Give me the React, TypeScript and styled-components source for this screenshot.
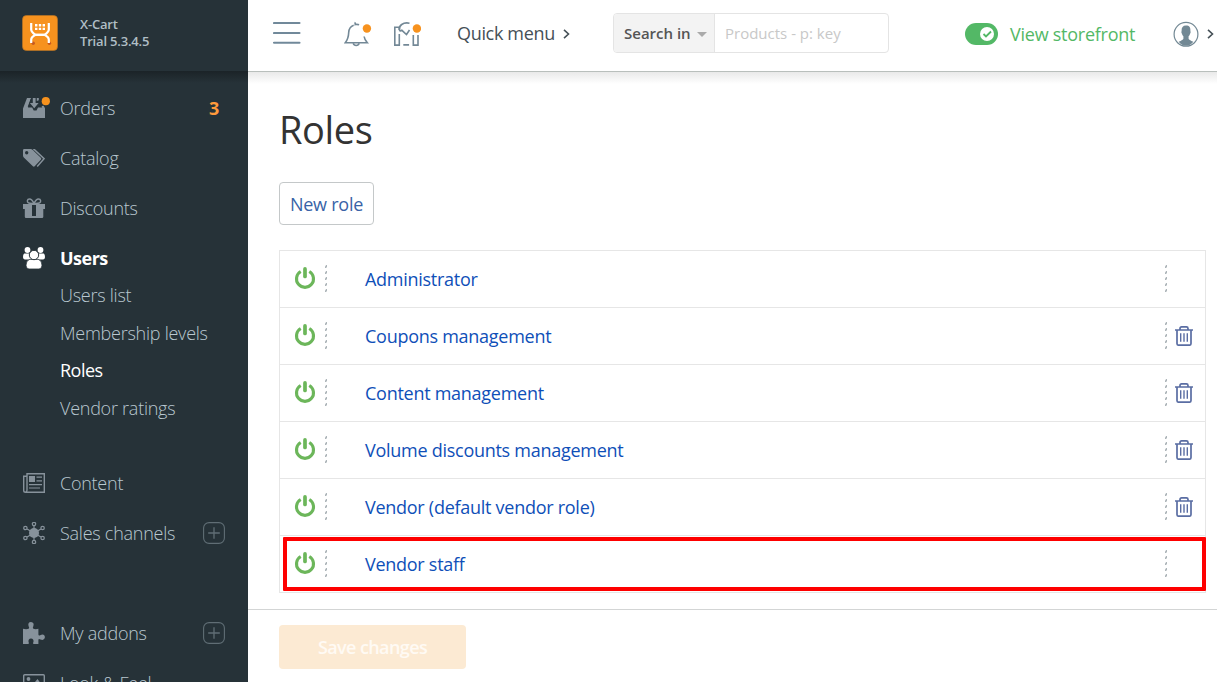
import React from 'react';
import styled, { createGlobalStyle } from 'styled-components';

const GlobalStyle = createGlobalStyle`
  * { box-sizing: border-box; }
  body {
    margin: 0;
    background: #fff;
    font-family: 'Open Sans', 'Noto Sans', sans-serif;
    font-size: 18px;
    letter-spacing: -0.25px;
    color: #333;
    overflow: hidden;
  }
`;

const Page = styled.div`
  display: flex;
  width: 100%;
  height: 682px;
  overflow: hidden;
`;

const Sidebar = styled.aside`
  flex: none;
  display: flex;
  flex-direction: column;
  width: 248px;
  height: 682px;
  background: #263238;
  overflow: hidden;
`;

const Brand = styled.div`
  flex: none;
  display: flex;
  align-items: flex-start;
  height: 71px;
  padding: 15px 0 0 22px;
`;

const BrandText = styled.div`
  margin: 1px 0 0 22px;
  font-size: 13px;
  line-height: 17px;
  font-weight: 600;
  letter-spacing: -0.18px;
  color: #b0bec5;
  white-space: nowrap;
`;

const Nav = styled.nav`
  flex: 1;
  min-height: 0;
  padding-top: 12px;
  background: linear-gradient(#1b2327, #263238 12px) no-repeat;
  overflow: hidden;
`;

const NavItem = styled.div<{ $active?: boolean; $gap?: number }>`
  display: flex;
  align-items: center;
  height: 50px;
  margin-top: ${(p) => p.$gap || 0}px;
  padding: 0 23px;
  color: ${(p) => (p.$active ? '#fff' : '#b9c8d0')};
  font-weight: ${(p) => (p.$active ? 700 : 300)};
  letter-spacing: ${(p) => (p.$active ? -0.5 : -0.25)}px;
  white-space: nowrap;

  > svg:first-child {
    flex: none;
    color: ${(p) => (p.$active ? '#fff' : '#87929b')};
  }
`;

const NavLabel = styled.span`
  flex: 1;
  margin-left: 15px;
`;

const Count = styled.span`
  width: 22px;
  text-align: center;
  font-weight: 700;
  color: #ff9a3c;
`;

const SubMenu = styled.div`
  margin: -6px 0 0;
  padding-left: 60px;
`;

const SubItem = styled.div<{ $active?: boolean }>`
  height: 37.5px;
  line-height: 37.5px;
  font-weight: ${(p) => (p.$active ? 400 : 300)};
  letter-spacing: ${(p) => (p.$active ? -0.5 : -0.25)}px;
  color: ${(p) => (p.$active ? '#fff' : '#b9c8d0')};
`;

const Main = styled.main`
  flex: 1;
  min-width: 0;
  display: flex;
  flex-direction: column;
  height: 682px;
`;

const Header = styled.header`
  flex: none;
  display: flex;
  align-items: center;
  height: 72px;
  padding: 0 2px 4px 25px;
  border-bottom: 1px solid #b9bfbc;
  white-space: nowrap;
`;

const HeaderIcon = styled.span<{ $gap?: number; $lift?: number }>`
  display: flex;
  margin-left: ${(p) => p.$gap || 0}px;
  padding-bottom: ${(p) => p.$lift || 0}px;
`;

const QuickMenu = styled.span`
  display: flex;
  align-items: center;
  gap: 8px;
  width: 156px;
  margin-left: 36px;
  padding-bottom: 2px;
  letter-spacing: -0.33px;
  color: #455057;

  svg {
    margin-top: 2px;
  }
`;

const Search = styled.div`
  display: flex;
  width: 276px;
  height: 40px;
  margin-bottom: 2px;
  border: 1px solid #e4e4e4;
  border-radius: 4px;
  font-size: 15px;
  letter-spacing: 0;
  overflow: hidden;
`;

const SearchScope = styled.div`
  display: flex;
  align-items: center;
  gap: 6px;
  width: 101px;
  padding-left: 10px;
  background: #f3f3f3;
  border-right: 1px solid #e4e4e4;
  font-weight: 600;
  color: #555;

  svg {
    margin-top: 3px;
  }
`;

const SearchInput = styled.div`
  flex: 1;
  padding-left: 10px;
  line-height: 38px;
  color: #c8c8c8;
`;

const Storefront = styled.div`
  display: flex;
  align-items: center;
  gap: 12px;
  width: 207.5px;
  margin-left: 76px;
  color: #53b866;
`;

const Account = styled.div`
  display: flex;
  align-items: center;
  gap: 8px;
  color: #455057;
`;

const Content = styled.section`
  flex: 1;
  padding: 31px 11px 0 31px;
  background: linear-gradient(#e9e9e9, #fff 12px) no-repeat;
`;

const Title = styled.h1`
  margin: 0 0 27px;
  font-size: 38px;
  line-height: 52px;
  font-weight: 400;
  letter-spacing: -0.4px;
  color: #333;
`;

const NewRole = styled.button`
  display: block;
  width: 95px;
  height: 43px;
  margin: 0 0 25px;
  padding: 0;
  border: 1px solid #c4c8c9;
  border-radius: 4px;
  background: #fff;
  font: inherit;
  letter-spacing: -0.25px;
  color: #3863a7;
`;

const Table = styled.div`
  width: 927px;
  border: 1px solid #e6e6e6;
  border-bottom: 0;
`;

const Row = styled.div`
  position: relative;
  display: flex;
  align-items: center;
  height: 57px;
  padding-left: 14px;
  border-bottom: 1px solid #e6e6e6;
`;

const RoleName = styled.a`
  flex: 1;
  margin-left: 37px;
  letter-spacing: -0.27px;
  color: #0f4fb8;
`;

const Actions = styled.div`
  display: flex;
  align-items: center;
  gap: 6.4px;
  width: 40px;
`;

const Lifted = styled.span<{ $gap?: number }>`
  display: flex;
  margin-left: ${(p) => p.$gap || 0}px;
  padding-bottom: 2px;
`;

const Highlight = styled.div`
  position: absolute;
  top: 1px;
  right: -1px;
  bottom: 1px;
  left: 3px;
  border: 4px solid #fe0000;
  border-radius: 1px;
`;

const Footer = styled.footer`
  flex: none;
  height: 73px;
  padding: 15px 31px;
  border-top: 1px solid #d3d5d5;
`;

const SaveButton = styled.button`
  width: 187px;
  height: 44px;
  padding: 0;
  border: 0;
  border-radius: 4px;
  background: #fcead3;
  font: inherit;
  font-weight: 600;
  letter-spacing: -0.6px;
  color: #fffaf4;
`;

const Logo = () => (
  <svg width="36" height="36" viewBox="0 0 36 36">
    <rect x=".5" y=".5" width="35" height="35" rx="4" fill="#f7921e" stroke="#b87424" strokeWidth=".7" />
    <circle cx="11.2" cy="28.3" r="1.7" fill="#c65a20" />
    <circle cx="27.4" cy="28.3" r="1.7" fill="#c65a20" />
    <g fill="none" stroke="#fff" strokeWidth="2.2">
      <path d="M9.2 8v6.500q0 2.500 4.300 5.300h9q4.300-2.800 4.300-5.300V8" />
      <path d="M9.200 28v-3.200q0-2.600 4.300-5h9q4.300 2.400 4.300 5V28" />
    </g>
    <path d="M13 9h2.400v2.400H13zM16.800 9h2.400v2.400h-2.400zM20.600 9H23v2.400h-2.400zM13 12.700h2.400v2.400H13zM16.800 12.700h2.400v2.400h-2.400zM20.600 12.700H23v2.400h-2.400z" fill="#fff" />
  </svg>
);

const OrdersIcon = () => (
  <svg width="28" height="24" viewBox="0 0 28 24" style={{ marginRight: -6 }}>
    <path d="M4 2h4.200L5 11.400h4.200l1.500 3.100h2.800l1.500-3.100h4.200L18.600 10l2-.2 1.400 2.400V22H0v-9.500z" fill="currentColor" />
    <path d="M9.800 2h2.800v5h3L11.200 12.200 6.900 7h2.900zM13.800 2h2v2.200l-2 .8z" fill="currentColor" />
    <path d="M8.300 2.500 5.300 10.500h4" fill="none" stroke="#263238" strokeWidth="1" />
    <circle cx="22.800" cy="5.200" r="4.100" fill="#f7921e" />
  </svg>
);

const CatalogIcon = () => (
  <svg width="22" height="18" viewBox="0 0 22 18">
    <path fillRule="evenodd" d="M0 1.2Q0 0 1.2 0h6.500q1 0 1.800.8l8.300 8q.9 1 0 1.900l-6.100 6.500q-.9.9-1.800 0L.8 8.500Q0 7.700 0 6.500zM3.700 2a1.700 1.700 0 1 0 0 3.400 1.700 1.700 0 0 0 0-3.400z" fill="currentColor" />
    <path d="M10.200.4h1l9.900 9.300-6.900 7.700" fill="none" stroke="currentColor" strokeWidth="1.500" />
  </svg>
);

const GiftIcon = () => (
  <svg width="22" height="20" viewBox="0 0 22 20">
    <path fillRule="evenodd" d="M0 6h22v5h-1.700v7.800q0 1.200-1.200 1.200H3q-1.200 0-1.200-1.200V11H0zM9 7h4v11H9z" fill="currentColor" />
    <path d="M11 5.500C9.500 2.200 8.400.9 6.500.9 4 .9 3.800 4 5.400 4.900c1.200.8 3.400.6 5.600.6zm0 0C12.500 2.200 13.600.9 15.500.9c2.500 0 2.700 3.100 1.100 4-1.200.8-3.400.6-5.600.6z" fill="none" stroke="currentColor" strokeWidth="1.500" />
  </svg>
);

const UsersIcon = () => (
  <svg width="22" height="22" viewBox="0 0 22 22">
    <circle cx="4.500" cy="3" r="2.900" fill="currentColor" />
    <circle cx="17.500" cy="3" r="2.900" fill="currentColor" />
    <path d="M1.200 6.600h7v6H1.800Q0 12.300 0 10.300 0 7.600 1.200 6.600zM20.800 6.600h-7v6h6.400q1.800-.3 1.800-2.300 0-2.700-1.200-3.700z" fill="currentColor" />
    <path d="M6.800 12.300h8.400q3.800 1 3.800 5.900 0 3.800-3 3.800H6q-3 0-3-3.800 0-4.900 3.800-5.900z" fill="currentColor" stroke="#263238" strokeWidth=".8" />
    <circle cx="11" cy="8" r="4.700" fill="currentColor" stroke="#263238" strokeWidth="1" />
  </svg>
);

const ContentIcon = () => (
  <svg width="22" height="20" viewBox="0 0 22 20">
    <path d="M4 .7h17.300v18.600H2.500Q.7 19.300.7 17.500V3.300H4zM4 3v14q0 2-1.500 2.200" fill="none" stroke="currentColor" strokeWidth="1.400" />
    <path d="M6 3h6v6H6z" fill="currentColor" />
    <path d="M13.500 4.200H19M13.500 7.800H19M6 11.600h13M6 15h11" stroke="currentColor" strokeWidth="1.200" />
  </svg>
);

const nodes = [[11, 2], [19.6, 6], [19.6, 16], [11, 20], [2.4, 16], [2.4, 6]];

const ChannelsIcon = () => (
  <svg width="22" height="22" viewBox="0 0 22 22">
    <path d="M11 4v14M4 7l14 8M18 7 4 15" stroke="currentColor" strokeWidth="1.200" />
    <circle cx="11" cy="11" r="5" fill="currentColor" />
    {nodes.map(([x, y]) => (
      <circle key={`${x}-${y}`} cx={x} cy={y} r="1.700" fill="#263238" stroke="currentColor" strokeWidth="1.200" />
    ))}
  </svg>
);

const AddonsIcon = () => (
  <svg width="22" height="22" viewBox="0 0 22 22">
    <path d="M0 6.800q3.600.7 5.700-.1Q6.700 5.800 5.600 4.300 4.400.2 8 0q3.600.4 2.300 4.300-1 1.800.1 2.400 2 .8 5 .1v5.600q.2 1.700 1.800.8 4-1.800 4.800 1.900-.5 3.900-4.500 2.400-2-1.300-2.100.4V22h-5q-.8-.8.1-2.200.4-3.200-2.500-3.400-2.900.2-2.500 3.400.8 1.400 0 2.200H0z" fill="currentColor" />
  </svg>
);

const LookIcon = () => (
  <svg width="22" height="18" viewBox="0 0 22 18">
    <rect x=".7" y=".7" width="20.600" height="16.600" rx="1" fill="none" stroke="currentColor" strokeWidth="1.400" />
    <circle cx="5.500" cy="5" r="1.900" fill="currentColor" />
    <path d="m3 14 4.500-5 2 2L14.500 5l4.500 6v4H3z" fill="currentColor" />
  </svg>
);

const PlusIcon = () => (
  <svg width="22" height="22" viewBox="0 0 22 22" fill="none" stroke="#606e75">
    <rect x=".6" y=".6" width="20.800" height="20.800" rx="5.500" strokeWidth="1.100" />
    <path d="M5.200 11h11.600M11 5.200v11.600" strokeWidth="1.300" />
  </svg>
);

const MenuIcon = () => (
  <svg width="28" height="24" viewBox="0 0 28 24">
    <path d="M1 2h25.500M1 12h25.500M1 21.700h25.500" stroke="#71899a" strokeWidth="2.100" strokeLinecap="round" />
  </svg>
);

const BellIcon = () => (
  <svg width="28" height="26" viewBox="0 0 28 26">
    <g fill="none" stroke="#738896" strokeWidth="1.600">
      <path d="M9.700 4.200Q5 5.800 4.700 11.500C4.500 16.500 3.900 18.500 1.300 21.700h22Q20.500 18.500 20.100 15.500" />
      <path d="M10.500 1.500q1 .5.800 2.100 1.600-.6 3.800.2M9.200 22.300q.7 2.200 3 2.200t3-2.200" />
    </g>
    <circle cx="22.900" cy="7.500" r="4.200" fill="#f7921e" />
  </svg>
);

const MapIcon = () => (
  <svg width="28" height="26" viewBox="0 0 28 26">
    <g fill="none" stroke="#738896" strokeWidth="1.600">
      <path d="M6.300 9V6.300H1.800v17.800h4.500V13M10.300 23.900h5.800M20.300 14v10.100H25V14" />
      <path d="M16.500 2.200q-4.700-1-7.800 1.300-3 2.200-2.300 5.200.2 2 2.500.6l4.600 4.200 3-4.500" />
    </g>
    <circle cx="23.900" cy="7.500" r="4.200" fill="#f7921e" />
  </svg>
);

const Chevron = () => (
  <svg width="7" height="10" viewBox="0 0 7 10">
    <path d="m1 .8 4.500 4.200L1 9.200" fill="none" stroke="#455057" strokeWidth="1.600" />
  </svg>
);

const CaretIcon = () => (
  <svg width="10" height="5" viewBox="0 0 10 5">
    <path d="M0 0h10L5 5z" fill="#aaa" />
  </svg>
);

const ToggleIcon = () => (
  <svg width="33" height="22" viewBox="0 0 33 22">
    <rect width="33" height="22" rx="11" fill="#53b866" />
    <circle cx="22" cy="11" r="7" fill="#fff" />
    <path d="m18.500 11 2.500 2.500 5-5" fill="none" stroke="#53b866" strokeWidth="1.800" />
  </svg>
);

const AvatarIcon = () => (
  <svg width="26" height="26" viewBox="0 0 26 26">
    <circle cx="13" cy="13.300" r="11.900" fill="#fff" stroke="#728894" strokeWidth="1.200" />
    <path d="M13 4.500c3.500 0 4.700 2 4.400 5.500q.8 1-.5 3.200-.5 1.300-1.300 2v2.600q.4 1.200 4.700 3-3 3.900-7.300 3.900t-7.300-3.900q4.300-1.800 4.700-3v-2.600q-.8-.7-1.300-2-1.300-2.200-.5-3.200-.3-5.500 4.400-5.500z" fill="#728894" />
  </svg>
);

const PowerIcon = () => (
  <svg width="22" height="22" viewBox="0 0 22 22" fill="none" stroke="#6cb65a">
    <path d="M6.700 4.500a8.500 8.500 0 1 0 8.600 0" strokeWidth="3.100" />
    <path d="M11 1.900v7.600" strokeWidth="3.700" strokeLinecap="round" />
  </svg>
);

const DottedDivider = () => (
  <svg width="3" height="27" viewBox="0 0 3 27">
    {[0, 6, 12, 18, 24].map((y) => (
      <path key={y} d={`M0 ${y + 3}V${y + 1.4}L1.200 ${y}H2v${2}L1 ${y + 3}z`} fill="#acb4b8" />
    ))}
  </svg>
);

const TrashIcon = () => (
  <svg width="20" height="20" viewBox="0 0 20 20" fill="none" stroke="#5a6da3">
    <path d="M1 4h18M3 4.500v13q0 1.700 1.700 1.700h10.600q1.700 0 1.700-1.700v-13M6 3.800V2.500Q6 .9 7.600.9h4.800q1.600 0 1.600 1.600v1.300" strokeWidth="1.700" />
    <path d="M6.700 7.200v8.600M10 7.200v8.600M13.300 7.200v8.600" strokeWidth="1.400" />
  </svg>
);

const roles = [
  { name: 'Administrator' },
  { name: 'Coupons management', removable: true },
  { name: 'Content management', removable: true },
  { name: 'Volume discounts management', removable: true },
  { name: 'Vendor (default vendor role)', removable: true },
  { name: 'Vendor staff', highlighted: true },
];

export default function App() {
  return (
    <Page>
      <GlobalStyle />
      <Sidebar>
        <Brand>
          <Logo />
          <BrandText>
            X-Cart
            <br />
            Trial 5.3.4.5
          </BrandText>
        </Brand>
        <Nav>
          <NavItem>
            <OrdersIcon />
            <NavLabel>Orders</NavLabel>
            <Count>3</Count>
          </NavItem>
          <NavItem>
            <CatalogIcon />
            <NavLabel>Catalog</NavLabel>
          </NavItem>
          <NavItem>
            <GiftIcon />
            <NavLabel>Discounts</NavLabel>
          </NavItem>
          <NavItem $active>
            <UsersIcon />
            <NavLabel>Users</NavLabel>
          </NavItem>
          <SubMenu>
            <SubItem>Users list</SubItem>
            <SubItem>Membership levels</SubItem>
            <SubItem $active>Roles</SubItem>
            <SubItem>Vendor ratings</SubItem>
          </SubMenu>
          <NavItem $gap={31}>
            <ContentIcon />
            <NavLabel>Content</NavLabel>
          </NavItem>
          <NavItem>
            <ChannelsIcon />
            <NavLabel>Sales channels</NavLabel>
            <PlusIcon />
          </NavItem>
          <NavItem $gap={50}>
            <AddonsIcon />
            <NavLabel>My addons</NavLabel>
            <PlusIcon />
          </NavItem>
          <NavItem>
            <LookIcon />
            <NavLabel>Look &amp; Feel</NavLabel>
          </NavItem>
        </Nav>
      </Sidebar>
      <Main>
        <Header>
          <HeaderIcon $lift={2}>
            <MenuIcon />
          </HeaderIcon>
          <HeaderIcon $gap={43}>
            <BellIcon />
          </HeaderIcon>
          <HeaderIcon $gap={21}>
            <MapIcon />
          </HeaderIcon>
          <QuickMenu>
            Quick menu
            <Chevron />
          </QuickMenu>
          <Search>
            <SearchScope>
              Search in
              <CaretIcon />
            </SearchScope>
            <SearchInput>Products - p: key</SearchInput>
          </Search>
          <Storefront>
            <ToggleIcon />
            View storefront
          </Storefront>
          <Account>
            <AvatarIcon />
            <Chevron />
          </Account>
        </Header>
        <Content>
          <Title>Roles</Title>
          <NewRole>New role</NewRole>
          <Table>
            {roles.map((role) => (
              <Row key={role.name}>
                <Lifted>
                  <PowerIcon />
                </Lifted>
                <Lifted $gap={9}>
                  <DottedDivider />
                </Lifted>
                <RoleName>{role.name}</RoleName>
                <Actions>
                  <Lifted>
                    <DottedDivider />
                  </Lifted>
                  {role.removable && <TrashIcon />}
                </Actions>
                {role.highlighted && <Highlight />}
              </Row>
            ))}
          </Table>
        </Content>
        <Footer>
          <SaveButton>Save changes</SaveButton>
        </Footer>
      </Main>
    </Page>
  );
}
